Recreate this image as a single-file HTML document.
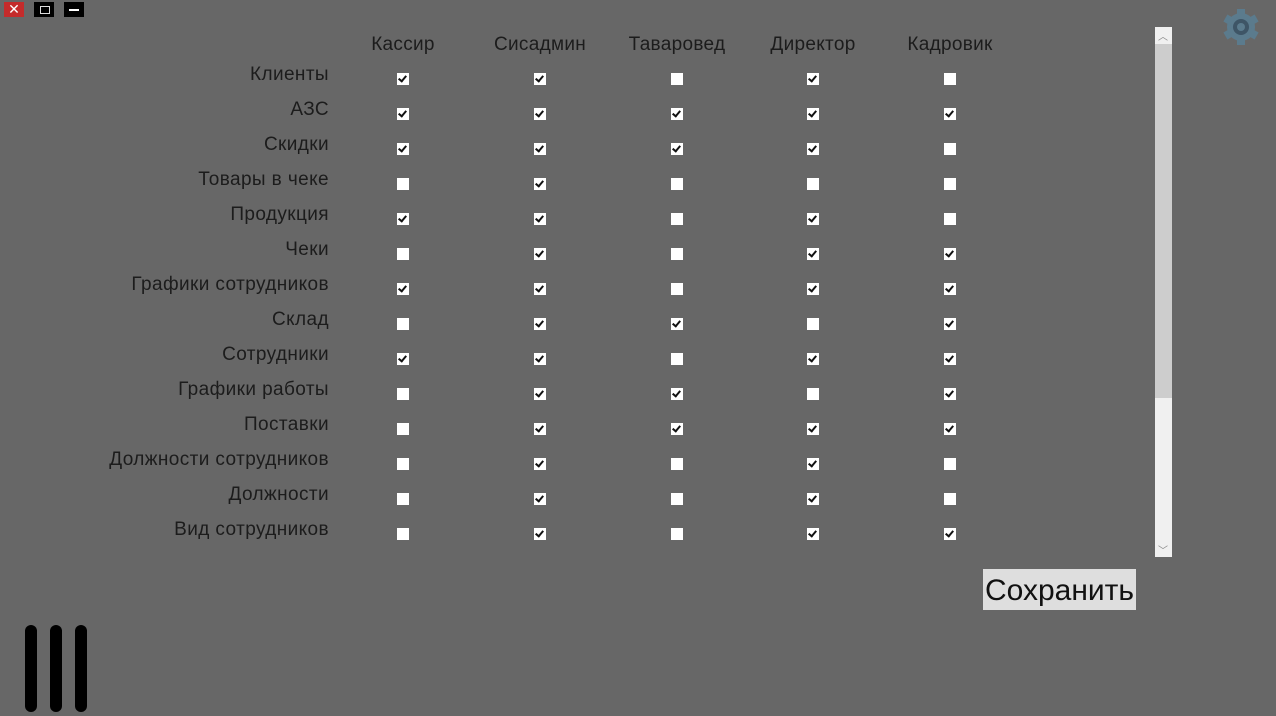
<!DOCTYPE html>
<html><head><meta charset="utf-8"><style>
body{margin:0;width:1276px;height:716px;background:#676767;position:relative;overflow:hidden;font-family:"Liberation Sans","DejaVu Sans",sans-serif;color:#1c1c1c}
.a{position:absolute}
.h{position:absolute;top:34px;font-size:19px;width:140px;text-align:center;margin-left:-70px;letter-spacing:0.3px}
.l{position:absolute;left:0;width:329px;text-align:right;font-size:19px;letter-spacing:0.4px}
.c{position:absolute;width:12px;height:12px;background:#fff}
.k::after{content:"";position:absolute;left:3px;top:1px;width:3px;height:6px;border-right:2px solid #111;border-bottom:2px solid #111;transform:rotate(40deg)}
.bar{position:absolute;top:625px;width:12px;height:87px;background:#000;border-radius:6px}
</style></head><body>
<div class="a" style="left:4px;top:2px;width:20px;height:15px;background:#c42b2b;color:#fff;font-size:14px;line-height:15px;text-align:center">✕</div>
<div class="a" style="left:34px;top:2px;width:20px;height:15px;background:#000"><div class="a" style="left:6px;top:4px;width:8px;height:6px;border:1px solid #ddd"></div></div>
<div class="a" style="left:64px;top:2px;width:20px;height:15px;background:#000"><div class="a" style="left:5px;top:7px;width:10px;height:2px;background:#fff"></div></div>
<svg class="a" style="left:1222px;top:8px" width="38" height="38" viewBox="0 0 38 38"><g fill="#5b7b8d" transform="translate(19,19)"><circle r="14"/><rect x="-4" y="-18" width="8" height="36"/><rect x="-4" y="-18" width="8" height="36" transform="rotate(60)"/><rect x="-4" y="-18" width="8" height="36" transform="rotate(120)"/></g><circle cx="19" cy="19" r="8" fill="#3e5566"/><circle cx="19" cy="19" r="4" fill="#5b7b8d"/></svg>
<div class="h" style="left:403px">Кассир</div>
<div class="h" style="left:540px">Сисадмин</div>
<div class="h" style="left:677px">Таваровед</div>
<div class="h" style="left:813px">Директор</div>
<div class="h" style="left:950px">Кадровик</div>
<div class="l" style="top:64px">Клиенты</div>
<div class="l" style="top:99px">АЗС</div>
<div class="l" style="top:134px">Скидки</div>
<div class="l" style="top:169px">Товары в чеке</div>
<div class="l" style="top:204px">Продукция</div>
<div class="l" style="top:239px">Чеки</div>
<div class="l" style="top:274px">Графики сотрудников</div>
<div class="l" style="top:309px">Склад</div>
<div class="l" style="top:344px">Сотрудники</div>
<div class="l" style="top:379px">Графики работы</div>
<div class="l" style="top:414px">Поставки</div>
<div class="l" style="top:449px">Должности сотрудников</div>
<div class="l" style="top:484px">Должности</div>
<div class="l" style="top:519px">Вид сотрудников</div>
<div id="g"></div>
<script>
var m=["11010","11111","11110","01000","11010","01011","11011","01101","11011","01101","01111","01010","01010","01011"];
var xs=[403,540,677,813,950],h="";
m.forEach(function(r,i){for(var j=0;j<5;j++){h+='<div class="c'+(r[j]=="1"?" k":"")+'" style="left:'+(xs[j]-6)+'px;top:'+(73+35*i)+'px"></div>';}});
document.getElementById("g").innerHTML=h;
</script>
<div class="a" style="left:1155px;top:27px;width:17px;height:530px;background:#f0f0f0"></div>
<div class="a" style="left:1155px;top:44px;width:17px;height:354px;background:#cdcdcd"></div>
<div class="a" style="left:1158px;top:28px;font-size:10px;color:#888">︿</div>
<div class="a" style="left:1158px;top:542px;font-size:10px;color:#888">﹀</div>
<div class="a" style="left:983px;top:569px;width:153px;height:41px;background:#dedede;font-size:30px;line-height:43px;text-align:center;color:#111">Сохранить</div>
<div class="bar" style="left:25px"></div>
<div class="bar" style="left:50px"></div>
<div class="bar" style="left:75px"></div>
</body></html>
